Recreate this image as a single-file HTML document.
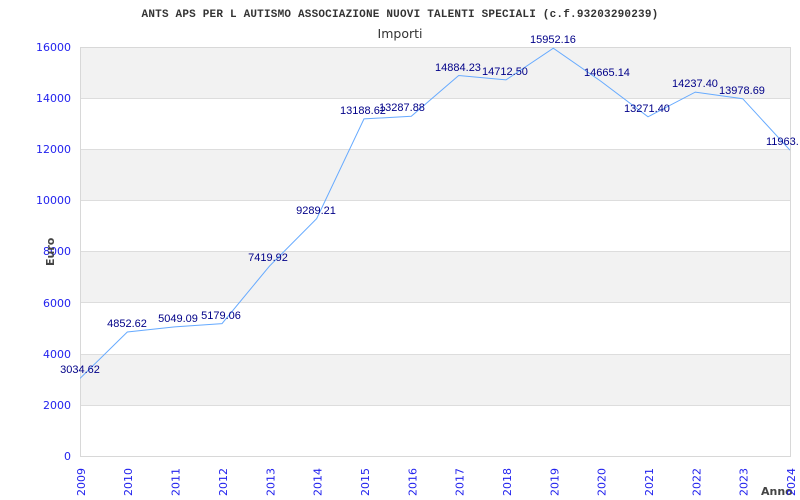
<!DOCTYPE html>
<html><head><meta charset="utf-8"><style>html,body{margin:0;padding:0;background:#fff;width:800px;height:500px;overflow:hidden}</style></head>
<body>
<svg width="800" height="500" xmlns="http://www.w3.org/2000/svg">
<rect width="800" height="500" fill="#fff"/>
<g fill="#f2f2f2">
<rect x="80.5" y="47" width="710" height="51"/>
<rect x="80.5" y="149" width="710" height="51"/>
<rect x="80.5" y="251" width="710" height="51"/>
<rect x="80.5" y="354" width="710" height="51"/>
</g>
<g stroke="#dddddd" stroke-width="1">
<line x1="80" y1="98.5" x2="790" y2="98.5"/>
<line x1="80" y1="149.5" x2="790" y2="149.5"/>
<line x1="80" y1="200.5" x2="790" y2="200.5"/>
<line x1="80" y1="251.5" x2="790" y2="251.5"/>
<line x1="80" y1="302.5" x2="790" y2="302.5"/>
<line x1="80" y1="354.5" x2="790" y2="354.5"/>
<line x1="80" y1="405.5" x2="790" y2="405.5"/>
</g>
<rect x="80.5" y="47.5" width="710" height="409" fill="none" stroke="#d8d8d8"/>
<text x="400" y="17" text-anchor="middle" font-family="Liberation Mono, monospace" font-weight="bold" font-size="11" letter-spacing="0.2" fill="#333">ANTS APS PER L AUTISMO ASSOCIAZIONE NUOVI TALENTI SPECIALI (c.f.93203290239)</text>
<text x="400" y="38" text-anchor="middle" font-family="DejaVu Sans, sans-serif" font-size="12.5" fill="#333">Importi</text>
<g font-family="DejaVu Sans, sans-serif" font-size="11" fill="#2222ee" text-anchor="end">
<text x="71" y="51">16000</text>
<text x="71" y="102">14000</text>
<text x="71" y="153">12000</text>
<text x="71" y="204">10000</text>
<text x="71" y="255">8000</text>
<text x="71" y="307">6000</text>
<text x="71" y="358">4000</text>
<text x="71" y="409">2000</text>
<text x="71" y="460">0</text>
</g>
<text transform="translate(54,266) rotate(-90)" font-family="DejaVu Sans, sans-serif" font-weight="bold" font-size="11" fill="#444">Euro</text>
<text x="761" y="495" font-family="DejaVu Sans, sans-serif" font-weight="bold" font-size="11" fill="#444">Anno</text>
<g font-family="DejaVu Sans, sans-serif" font-size="11" fill="#2222ee">
<text transform="translate(85,496) rotate(-90)">2009</text>
<text transform="translate(132,496) rotate(-90)">2010</text>
<text transform="translate(179.7,496) rotate(-90)">2011</text>
<text transform="translate(227,496) rotate(-90)">2012</text>
<text transform="translate(274.3,496) rotate(-90)">2013</text>
<text transform="translate(321.7,496) rotate(-90)">2014</text>
<text transform="translate(369,496) rotate(-90)">2015</text>
<text transform="translate(416.3,496) rotate(-90)">2016</text>
<text transform="translate(463.7,496) rotate(-90)">2017</text>
<text transform="translate(511,496) rotate(-90)">2018</text>
<text transform="translate(558.3,496) rotate(-90)">2019</text>
<text transform="translate(605.7,496) rotate(-90)">2020</text>
<text transform="translate(653,496) rotate(-90)">2021</text>
<text transform="translate(700.3,496) rotate(-90)">2022</text>
<text transform="translate(747.7,496) rotate(-90)">2023</text>
<text transform="translate(795,496) rotate(-90)">2024</text>
</g>
<svg x="80" y="47" width="711" height="410" overflow="hidden">
<polyline transform="translate(-80,-47)" fill="none" stroke="#66aaff" stroke-width="1" points="80,378.4 127.3,332 174.7,326.9 222,323.6 269.3,266.3 316.7,218.6 364,118.9 411.3,116.3 458.7,75.5 506,79.9 553.3,48.2 600.7,81.1 648,116.8 695.3,92.1 742.7,98.7 790,150.2"/>
</svg>
<g font-family="Liberation Sans, sans-serif" font-size="11" fill="#000088" text-anchor="middle">
<text x="80" y="373">3034.62</text>
<text x="127" y="327">4852.62</text>
<text x="178" y="322">5049.09</text>
<text x="221" y="319">5179.06</text>
<text x="268" y="261">7419.92</text>
<text x="316" y="214">9289.21</text>
<text x="363" y="114">13188.62</text>
<text x="402" y="111">13287.88</text>
<text x="458" y="71">14884.23</text>
<text x="505" y="75">14712.50</text>
<text x="553" y="43">15952.16</text>
<text x="607" y="76">14665.14</text>
<text x="647" y="112">13271.40</text>
<text x="695" y="87">14237.40</text>
<text x="742" y="94">13978.69</text>
<text x="766" y="145" text-anchor="start">11963.</text>
</g>
</svg>
</body></html>
